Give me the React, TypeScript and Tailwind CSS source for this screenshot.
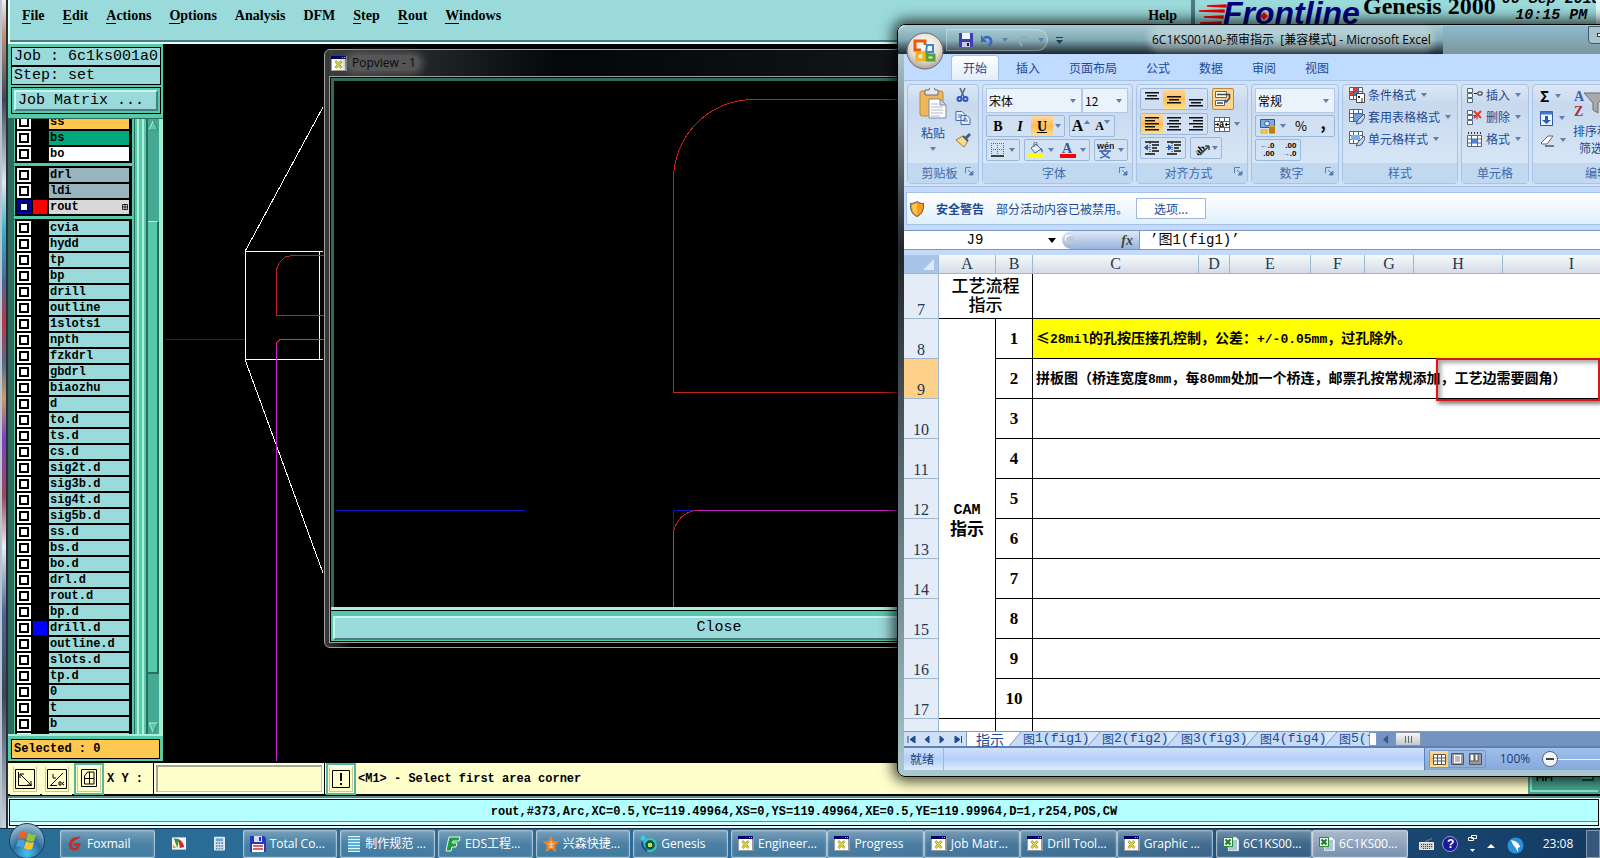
import { ReactNode } from 'react';

interface Layer {
  name: string;
  fill?: string;
  swatch?: string;
  active?: boolean;
}

const layerGroups: Layer[][] = [
  [
    { name: 'ss', fill: 'bg-[#ffc64f]' },
    { name: 'bs', fill: 'bg-[#00a67c]' },
    { name: 'bo', fill: 'bg-white' },
  ],
  [
    { name: 'drl', fill: 'bg-[#9ab4be]' },
    { name: 'ldi', fill: 'bg-[#9ab4be]' },
    { name: 'rout', fill: 'bg-[#d8d8d8]', swatch: 'bg-[#ff0000]', active: true },
  ],
  [
    'cvia', 'hydd', 'tp', 'bp', 'drill', 'outline', '1slots1', 'npth', 'fzkdrl', 'gbdrl', 'biaozhu',
    'd', 'to.d', 'ts.d', 'cs.d', 'sig2t.d', 'sig3b.d', 'sig4t.d', 'sig5b.d', 'ss.d', 'bs.d', 'bo.d',
    'drl.d', 'rout.d', 'bp.d', 'drill.d', 'outline.d', 'slots.d', 'tp.d', '0', 't', 'b', '',
  ].map((name) => ({ name, swatch: name === 'drill.d' ? 'bg-[#0000ff]' : undefined })),
];

const menus = [
  ['F', 'ile'], ['E', 'dit'], ['A', 'ctions'], ['O', 'ptions'], ['', 'Analysis'],
  ['', 'DFM'], ['S', 'tep'], ['R', 'out'], ['W', 'indows'],
];

const columns = [
  { name: 'A', width: 57 }, { name: 'B', width: 37 }, { name: 'C', width: 166 },
  { name: 'D', width: 31 }, { name: 'E', width: 81 }, { name: 'F', width: 54 },
  { name: 'G', width: 49 }, { name: 'H', width: 89 }, { name: 'I', width: 138 },
];

const notes: Record<number, string> = {
  1: '≤28mil的孔按压接孔控制，公差：+/-0.05mm，过孔除外。',
  2: '拼板图（桥连宽度8mm，每80mm处加一个桥连，邮票孔按常规添加，工艺边需要圆角）',
};

/* ---------- icons ---------- */

const Arrow = ({ className = '' }: { className?: string }) => (
  <svg width="7" height="4" viewBox="0 0 7 4" className={`shrink-0 ${className}`}>
    <path d="M0 0h6L3 4z" fill="#5f7fae" />
  </svg>
);

const XIcon = () => (
  <svg width="16" height="15" viewBox="0 0 16 15" className="shrink-0">
    <path d="M0 0h16v15H0z" fill="#999" />
    <path d="M1 3h13v11H1z" fill="#fff" />
    <path d="M0 0h15v3H0z" fill="#00006c" />
    <path d="M11 1h1v1h-1zM13 1h1v1h-1z" fill="#bbb" />
    <path d="M4.500 5l6 7M10.500 5l-6 7" stroke="#777a20" strokeWidth="2.500" />
    <path d="M4.500 5l6 7M10.500 5l-6 7" stroke="#e4dc30" strokeWidth="1.500" />
  </svg>
);

const ExcelIcon = () => (
  <svg width="16" height="16" viewBox="0 0 16 16" className="shrink-0">
    <path d="M5 1h8l3 3v11H5z" fill="#f4f8fb" stroke="#8aa" strokeWidth=".6" />
    <path d="M10 5h4M10 7h4M8 9h6M6 11h8M6 13h8" stroke="#6590c0" />
    <path d="M0 1h10v10H0z" fill="#2f8a35" />
    <path d="M1 2h8v8H1z" fill="#e4f5df" />
    <path d="M2.500 3.500l5 5M7.500 3.500l-5 5" stroke="#1c7a26" strokeWidth="2" />
  </svg>
);

const lines = (rows: [number, number][], top: number) =>
  rows.map(([x, w], i) => <rect key={i} x={x} y={top + i * 3} width={w} height="1.500" fill="#111" />);

const AlignTop = () => <svg width="16" height="16">{lines([[1, 14], [3, 10], [1, 14]], 1)}</svg>;
const AlignMid = () => <svg width="16" height="16">{lines([[1, 14], [3, 10], [1, 14]], 5)}</svg>;
const AlignBot = () => <svg width="16" height="16">{lines([[1, 14], [3, 10], [1, 14]], 8)}</svg>;
const AlignLeft = () => <svg width="16" height="16">{lines([[1, 14], [1, 10], [1, 14], [1, 10], [1, 14]], 1)}</svg>;
const AlignCenter = () => <svg width="16" height="16">{lines([[1, 14], [3, 10], [1, 14], [3, 10], [1, 14]], 1)}</svg>;
const AlignRight = () => <svg width="16" height="16">{lines([[1, 14], [5, 10], [1, 14], [5, 10], [1, 14]], 1)}</svg>;

const Indent = ({ flip = false }: { flip?: boolean }) => (
  <svg width="16" height="16" viewBox="0 0 16 16">
    <path d="M1 2h14M8 5h7M8 8h5M8 11h7M1 14h10" stroke="#111" strokeWidth="1.500" />
    <path d="M6 1v14" stroke="#111" strokeDasharray="1 1" />
    {flip ? (
      <path d="M0 7.500h4M2.500 5l3 2.500-3 2.500z" stroke="#2858c8" fill="#2858c8" />
    ) : (
      <path d="M6 7.500H2M3.500 5L.5 7.500l3 2.500z" stroke="#2858c8" fill="#2858c8" />
    )}
  </svg>
);

const WrapText = () => (
  <svg width="18" height="18" viewBox="0 0 18 18">
    <path d="M1.500 1.500h11v6h-11zM1.500 10.500h9v5h-9z" fill="#fff" stroke="#56657c" />
    <path d="M3 4.500h12.500v4L12 12" fill="none" stroke="#444" strokeWidth="1.500" />
    <path d="M11 9l-1 4 4-1z" fill="#2858c8" />
    <path d="M3 13h6" stroke="#444" strokeWidth="1.500" />
  </svg>
);

const MergeIcon = () => (
  <svg width="16" height="15" viewBox="0 0 16 15" className="shrink-0">
    <path d="M.5.500h15v14H.500zM.500 4.500h15M.500 10.500h15M5.500.500v4M10.500.500v4M5.500 10.500v4M10.500 10.500v4" fill="#fff" stroke="#56657c" />
    <path d="M1 7.500h3M12 7.500h3M3 6l2 1.500L3 9M13 6l-2 1.500L13 9" stroke="#111" fill="none" />
    <text x="5" y="10" fontSize="9" fontWeight="bold" fontFamily="Liberation Sans">a</text>
  </svg>
);

const OrientIcon = () => (
  <svg width="18" height="16" viewBox="0 0 18 16" className="shrink-0">
    <text x="0" y="13" fontSize="10" fontFamily="Liberation Serif" fontWeight="bold" transform="rotate(-40 6 9)">ab</text>
    <path d="M6 15L15 6M15 6h-4M15 6v4" stroke="#444" fill="none" strokeWidth="1.500" />
  </svg>
);

const BorderIcon = () => (
  <svg width="14" height="14" viewBox="0 0 14 14" className="shrink-0">
    <path d="M.5 0v12M6.500 0v12M12.500 0v12M0 .5h13M0 6.500h13" stroke="#667" strokeDasharray="1 1" />
    <path d="M0 13h13" stroke="#111" strokeWidth="1.500" />
  </svg>
);

const FillIcon = () => (
  <svg width="16" height="16" viewBox="0 0 16 16" className="shrink-0">
    <path d="M3 6l5-4 5 5-6 4z" fill="#e8f0fa" stroke="#4a6488" />
    <path d="M6 5V1.500A1.500 1.500 0 019 1.500V4" fill="none" stroke="#56657c" />
    <path d="M13 6c2 1 2 3 1.500 5L12 7z" fill="#3e70c0" />
    <path d="M0 12h16v4H0z" fill="#ffff00" />
  </svg>
);

const FontColorIcon = () => (
  <svg width="16" height="16" viewBox="0 0 16 16" className="shrink-0">
    <text x="2" y="11" fontSize="14" fontWeight="bold" fill="#35568e" fontFamily="Liberation Serif">A</text>
    <path d="M0 12h16v4H0z" fill="#ff0000" />
  </svg>
);

const PinyinIcon = () => (
  <svg width="17" height="17" viewBox="0 0 17 17" className="shrink-0">
    <text x="0" y="7" fontSize="9" fontWeight="bold" fill="#222" fontFamily="Liberation Sans">wén</text>
    <path d="M8 7v2M2 9h12M4 9c2 3 5 6 9 7M12 9c-2 4-5 6-9 7" stroke="#3d5ec0" strokeWidth="1.500" fill="none" />
  </svg>
);

const CurrencyIcon = () => (
  <svg width="17" height="17" viewBox="0 0 17 17" className="shrink-0">
    <path d="M1.500 1.500h14v8h-14z" fill="#7fa8de" stroke="#2f5a9c" />
    <circle cx="8" cy="5.500" r="2.500" fill="#dce9f8" stroke="#2f5a9c" />
    <path d="M10 8h6v8h-6z" fill="#e8a818" />
    <path d="M10 10h6M10 12h6M10 14h6" stroke="#8c5c00" />
    <path d="M2 12h6v3H2z" fill="#ffd24a" stroke="#a87800" strokeWidth=".5" />
  </svg>
);

const PasteIcon = () => (
  <svg width="28" height="31" viewBox="0 0 28 31">
    <rect x="1" y="3" width="23" height="25" rx="2" fill="#f0b758" stroke="#c08a3a" />
    <path d="M6 2h4a3 3 0 016 0h3v5H6z" fill="#e8e8ea" stroke="#6a6a70" />
    <path d="M10 11h11l6 6v13H10z" fill="#fff" stroke="#7689a5" />
    <path d="M21 11v6h6z" fill="#cfd9e8" stroke="#7689a5" />
    <path d="M12 16h7M12 19h12M12 22h12M12 25h12M12 28h9" stroke="#a9b8cf" />
  </svg>
);

const CutIcon = () => (
  <svg width="14" height="15" viewBox="0 0 14 15">
    <path d="M4 0l4 9M9 0L5 9" stroke="#56657c" strokeWidth="1.500" />
    <circle cx="3.500" cy="11" r="2" fill="none" stroke="#2858c8" strokeWidth="2" />
    <circle cx="9.500" cy="11" r="2" fill="none" stroke="#2858c8" strokeWidth="2" />
  </svg>
);

const CopyIcon = () => (
  <svg width="16" height="14" viewBox="0 0 16 14">
    <path d="M1 .5h6l3 3v6H1zM6 4.500h6l3 3v6H6z" fill="#e9f1fc" stroke="#4369a8" />
    <path d="M3 4h4M3 6h3M8 8h4M8 10h5" stroke="#4c7ccb" />
  </svg>
);

const BrushIcon = () => (
  <svg width="16" height="15" viewBox="0 0 16 15">
    <path d="M10 4l4-4 2 2-4 4z" fill="#3b5b96" />
    <path d="M1 7l7-4 5 5-4 6z" fill="#f5dd8d" stroke="#a37b2c" />
    <path d="M8 3l5 5" stroke="#555" strokeWidth="2" />
  </svg>
);

const TableIcon = ({ kind }: { kind: 'cond' | 'table' | 'cell' }) => (
  <svg width="16" height="16" viewBox="0 0 16 16" className="shrink-0">
    <path d="M.5.500h13v12H.500zM.500 4.500h13M.500 8.500h13M4.500.500v12M9.500.500v12" fill="#fff" stroke="#4a6488" />
    {kind === 'cond' && (
      <>
        <path d="M5 1h4v3H5zM1 5h3v3H1z" fill="#d9482b" />
        <path d="M5 5h4v3H5z" fill="#3f78cf" />
        <path d="M7.500 6.500h8v9h-8z" fill="#fff" stroke="#444" />
        <path d="M9 9l2 2M11 9l-2 2M12 12h2M12 14h2" stroke="#222" />
      </>
    )}
    {kind === 'table' && <path d="M5 5h8v7H5z" fill="#6f9fe0" />}
    {kind === 'cell' && <path d="M2 4h9v5H2z" fill="#7fb0ee" />}
    {kind !== 'cond' && (
      <path d="M15 5l-6 6-2 4 5-1 4-6z" fill="#c9d6ea" stroke="#3c5c94" />
    )}
  </svg>
);

const CellIcon = ({ kind }: { kind: 'insert' | 'delete' | 'format' }) => (
  <svg width="16" height="15" viewBox="0 0 16 15" className="shrink-0">
    {kind === 'format' ? (
      <>
        <path d="M.5 3.500h14v11H.500zM.500 7h14M.500 11h14M4.500 3v12M10.500 3v12" fill="#fff" stroke="#56657c" />
        <path d="M5 7h5v4H5z" fill="#4f83d8" />
        <path d="M1 1h14" stroke="#333" strokeDasharray="1 2" strokeWidth="2" />
      </>
    ) : (
      <>
        <path d="M.5.500h5v4h-5zM.500 5.500h5v4h-5zM.500 10.500h5v4h-5z" fill="#fff" stroke="#56657c" />
        {kind === 'insert' ? (
          <path d="M11 4h4v3h-4zM7 5.500h3" fill="#fff" stroke="#222" />
        ) : (
          <>
            <path d="M6 5.500h4v4" stroke="#2858c8" fill="none" />
            <path d="M7 1l7 7M14 1L7 8" stroke="#e03a25" strokeWidth="2" />
          </>
        )}
      </>
    )}
  </svg>
);

const SortIcon = () => (
  <svg width="34" height="30" viewBox="0 0 34 30">
    <text x="0" y="13" fontSize="14" fill="#3d5fae" fontWeight="bold" fontFamily="Liberation Serif">A</text>
    <text x="0" y="28" fontSize="14" fill="#a3343c" fontWeight="bold" fontFamily="Liberation Serif">Z</text>
    <path d="M10 5h23l-9 10v10l-5-3v-7z" fill="#a9a9a9" stroke="#6f6f6f" />
  </svg>
);

const OfficeOrb = () => (
  <svg width="38" height="38" viewBox="0 0 38 38">
    <defs>
      <radialGradient id="orb" cx=".5" cy=".35" r=".7">
        <stop offset="0" stopColor="#fff" />
        <stop offset=".6" stopColor="#e6ddd2" />
        <stop offset="1" stopColor="#9c958f" />
      </radialGradient>
    </defs>
    <circle cx="19" cy="19" r="18" fill="url(#orb)" stroke="#6d6a6a" />
    <g fill="none" strokeWidth="3">
      <path d="M15 18H9V9h10v4" stroke="#e8590c" />
      <path d="M21 13h6v7h-7z" stroke="#3c86d6" strokeWidth="2" />
      <path d="M18 19v9h-7v-7h5" stroke="#f2b41c" />
      <path d="M21 23h7v5h-7v-8" stroke="#58a032" />
    </g>
  </svg>
);

const StartOrb = () => (
  <svg width="38" height="38" viewBox="0 0 38 38">
    <defs>
      <radialGradient id="start" cx=".5" cy=".85" r=".8">
        <stop offset="0" stopColor="#49c4ee" />
        <stop offset=".5" stopColor="#2a6d9f" />
        <stop offset="1" stopColor="#9bbccd" />
      </radialGradient>
    </defs>
    <circle cx="19" cy="19" r="17.500" fill="url(#start)" stroke="#123e63" />
    <path d="M12 10c3-1 5-1 7 1l-2 7c-2-2-4-2-7-1z" fill="#e9602a" />
    <path d="M20 11c3 2 5 2 8 1l-2 7c-3 1-5 1-8-1z" fill="#8cc63e" />
    <path d="M10 18c3-1 5-1 7 1l-2 7c-2-2-4-2-7-1z" fill="#4aa0e0" />
    <path d="M18 19c3 2 5 2 8 1l-2 7c-3 1-5 1-8-1z" fill="#fcc42c" />
  </svg>
);

const Shield = () => (
  <svg width="14" height="16" viewBox="0 0 14 16" className="shrink-0">
    <path d="M7 .5c2 1.500 4 2 6.500 2 .3 6-1 10.500-6.500 13C1.500 13 .2 8.500.500 2.500 3 2.500 5 2 7 .5z" fill="#ff9a1a" stroke="#555" />
    <path d="M7 2v12C3.500 12 2.200 8.500 2 4c2 0 3.500-.7 5-2z" fill="#ffc65c" />
  </svg>
);

/* ---------- genesis ---------- */

const LayerRow = ({ layer }: { layer: Layer }) => (
  <label className="flex h-4 items-center gap-0.5 px-0.5">
    <input
      type="checkbox"
      aria-label={layer.name || 'layer'}
      className={`h-3.5 w-3.5 shrink-0 appearance-none border-2 bg-white ${
        layer.active
          ? 'border-[#0000b4] shadow-[inset_0_0_0_2px_#000060]'
          : 'border-white shadow-[inset_0_0_0_2px_#000]'
      }`}
    />
    <span className={`h-3.5 w-3.5 shrink-0 ${layer.swatch ?? ''}`} />
    <span className={`flex h-3.5 flex-1 items-center justify-between px-px text-[12px] leading-3.5 font-bold ${layer.fill ?? 'bg-[#9bdada]'}`}>
      {layer.name}
      {layer.active && (
        <svg width="6" height="6" viewBox="0 0 6 6">
          <path d="M.5.500h5v5h-5zM3 0v6M0 3h6" fill="none" stroke="#000" strokeWidth=".8" />
        </svg>
      )}
    </span>
  </label>
);

const Sidebar = () => (
  <aside className="flex w-[155px] shrink-0 flex-col bg-[#55c9aa] pt-[3px] font-['Liberation_Mono',monospace] text-black">
    <div className="mr-0.5 ml-[3px] flex flex-col text-[15px] leading-[17px]">
      <div className="border border-black bg-[#9bdada] pl-0.5 whitespace-nowrap">Job : 6c1ks001a0</div>
      <div className="border border-black bg-[#9bdada] pl-0.5">Step: set</div>
      <div className="mt-0.5 border border-black p-0.5">
        <button className="block h-[21px] w-full border-2 border-t-[#c8f4f4] border-r-[#4c7c80] border-b-[#4c7c80] border-l-[#c8f4f4] bg-[#9bdada] pl-0.5 text-left leading-4">
          Job Matrix ...
        </button>
      </div>
    </div>
    <div className="mt-1 flex min-h-0 flex-1 border-t border-[#2e6b5b]">
      <div className="w-[6px] bg-[#2e6b5b]" />
      <div className="w-[119px] overflow-hidden bg-[#55c9aa]">
        <div className="-mt-1.5 flex flex-col gap-[3px]">
          {layerGroups.map((group, i) => (
            <div key={i} className="border border-y-black border-r-black border-l-[#55c9aa] bg-black">
              {group.map((layer) => (
                <LayerRow key={layer.name} layer={layer} />
              ))}
            </div>
          ))}
        </div>
      </div>
      <div className="ml-0.5 w-px bg-[#2e6b5b]" />
      <div className="w-0.5 bg-[#55c9aa]" />
      <div className="mr-[3px] w-0.5 bg-[#a8f0da]" />
      <div className="w-0.5 bg-[#a8f0da]" />
      <div className="ml-0.5 flex flex-1 flex-col border-r-4 border-l-2 border-r-[#a0ecd4] border-l-[#2e6b5b] bg-[#45a892]">
        <svg width="11" height="12" viewBox="0 0 11 12">
          <path d="M5.500 1L1 11h9z" fill="#55c9aa" stroke="#a8f0da" />
          <path d="M5.500 1L10 11H1" fill="none" stroke="#2e6b5b" />
        </svg>
        <div className="mt-[90px] mb-12 flex-1 border-t border-r-2 border-b-2 border-t-[#a8f0da] border-r-[#2e6b5b] border-b-[#2e6b5b] bg-[#55c9aa]" />
        <svg width="11" height="12" viewBox="0 0 11 12">
          <path d="M1 1h9L5.500 11z" fill="#55c9aa" stroke="#a8f0da" />
          <path d="M10 1L5.500 11" stroke="#2e6b5b" />
        </svg>
      </div>
    </div>
    <div className="mb-0.5 border-t-2 border-[#a8f0da] px-[3px] pt-[3px]">
      <div className="h-5 border border-black bg-[#ffc850] pl-0.5 text-[12px] leading-[18px] font-bold">Selected : 0</div>
    </div>
  </aside>
);

const MainCanvas = () => (
  <svg className="h-full w-full bg-black" shapeRendering="crispEdges" fill="none">
    <g transform="translate(-164 -44)">
      <path d="M166 339.500H246" stroke="#1414c8" />
      <path d="M324 107L246 251.500V359.500L324 573M246 251.500H324M246 359.500H324M320.500 251V359" stroke="#fff" />
      <path d="M325 255.500H293L286 257L280 263L277.500 270V315.500H325" stroke="#c8201c" />
      <path d="M325 339.500H281M277.500 343V761" stroke="#c828c8" />
      <path d="M281 339.500L277.500 343" stroke="#c8201c" />
    </g>
  </svg>
);

const Popview = () => (
  <section className="absolute top-[49px] left-[324px] flex h-[599px] w-[790px] flex-col rounded-md border border-[#a0a0a0] bg-linear-to-r from-[#3a3c3e] via-black via-5% to-black p-1 pt-0">
    <header className="flex h-[26px] items-center bg-linear-to-r from-[#3c3e40] via-[#050708] via-30% to-[#1c2022] pl-0.5">
      <XIcon />
      <h2 className="ml-px rounded-lg bg-[#666]/70 px-1 font-['Open_Sans',sans-serif] text-[12px] leading-4 text-[#0a0a0a] shadow-[0_0_6px_4px_rgba(102,102,102,0.6)]">
        Popview - 1
      </h2>
    </header>
    <div className="flex min-h-0 flex-1 flex-col border border-[#a0a0a0] bg-black p-px">
      <svg className="min-h-0 w-full flex-1 border-t-[3px] border-l-[3px] border-[#2e6b5b] bg-black" fill="none" shapeRendering="crispEdges">
        <g transform="translate(-334 -81)">
          <path d="M1120 99.500H753A80 80 0 00673.500 180V392.500H1120" stroke="#c8201c" />
          <path d="M335 510.500H525M673.500 534V510.500H698" stroke="#1414c8" />
          <path d="M698 510.500A25 25 0 00673.500 534" stroke="#c8201c" />
          <path d="M698 510.500H1120M673.500 534V610" stroke="#c828c8" />
        </g>
      </svg>
      <div className="border-t-[3px] border-[#a8f0da] bg-[#55c9aa]">
        <div className="border-t border-black px-0.5 pt-0.5 pb-px">
          <button className="h-[24px] w-full border-2 border-t-[#c8f4f4] border-r-[#4c7c80] border-b-[#4c7c80] border-l-[#c8f4f4] bg-[#9bdada] font-['Liberation_Mono',monospace] text-[15px] leading-5">
            Close
          </button>
        </div>
      </div>
    </div>
  </section>
);

const GenesisHeader = () => (
  <header className="flex h-11 shrink-0 bg-[#9bdada] font-['Liberation_Serif',serif] text-black">
    <div className="flex flex-1 items-start border-b-2 border-l-2 border-[#e0ffff] shadow-[inset_0_-2px_0_#4c7c80]">
      <nav className="flex flex-1 gap-[18px] pt-1.5 pl-3 text-[14px] leading-[19px] font-bold">
        {menus.map(([key, rest]) => (
          <button key={rest}>
            <span className="border-b border-black">{key}</span>
            {rest}
          </button>
        ))}
        <button className="mr-3 ml-auto">Help</button>
      </nav>
    </div>
    <div className="ml-0.5 flex w-[409px] items-start overflow-hidden border-x-4 border-[#dffafa] border-l-[#4c7c80]">
      <svg width="164" height="40" viewBox="0 0 164 40" className="mt-px ml-1 shrink-0">
        <path d="M8 5l19-1v2zM0 10l25-1v2zM5 16l19-1v2zM1 22l21-1v2z" stroke="#f00000" strokeWidth="1.500" />
        <text x="24" y="23" fontSize="32" fontStyle="italic" fontWeight="bold" fill="#00007f" fontFamily="Liberation Sans">
          Frontline
        </text>
        <path d="M65 11l4 4-4 4-4-4z" fill="#f00000" />
      </svg>
      <span className="-mt-2 text-[24px] leading-7 font-bold whitespace-nowrap">Genesis 2000</span>
      <span className="-mt-2 ml-1.5 text-center font-['Liberation_Mono',monospace] text-[15px] leading-4 font-bold whitespace-nowrap italic">
        06 Sep 2018
        <br />
        10:15 PM
      </span>
    </div>
  </header>
);

const ToolButton = ({ label, green, children }: { label: string; green?: boolean; children: ReactNode }) => (
  <button
    aria-label={label}
    className={`flex h-8 w-[30px] shrink-0 items-center justify-center border-2 p-px ${green ? 'border-[#55b898]' : 'border-[#ffffcc]'} bg-[#ffffcc]`}
  >
    <span className="flex h-full w-full items-center justify-center border border-[#c8c8a0] border-t-[#ffffee]">
      <svg width="20" height="20" viewBox="0 0 20 20" fill="none" stroke="#000">
        {children}
      </svg>
    </span>
  </button>
);

const CommandBar = () => (
  <div className="flex h-[35px] shrink-0 items-center gap-0.5 border-y-2 border-black bg-[#ffffcc] pl-0.5 font-['Liberation_Mono',monospace] text-[12px] font-bold text-black">
    <ToolButton label="Resize">
      <path d="M.5.500h19v19H.500zM3.500 3v13.500H17M5 5l11 11M5 9V5h4M16 12v4h-4" />
    </ToolButton>
    <ToolButton label="Angle">
      <path d="M.5.500h19v19H.500zM3 17L16 4M3 16.500h7M6 5v4h3M12 13h2v3h-2zM17 13l-2 1.500 2 1.500" />
    </ToolButton>
    <ToolButton label="Grid" green>
      <path d="M2.500.500h15v17h-15zM5.500 7l3-4H15v12H5.500zM10.500 3v12M5.500 9.500H15" />
    </ToolButton>
    <label htmlFor="xy" className="w-[46px] shrink-0 pl-px whitespace-nowrap">X Y :</label>
    <input
      id="xy"
      className="h-[31px] w-[170px] border-2 border-[#ffffee] bg-[#ffffcc] px-1 shadow-[inset_2px_2px_0_#a8a888,inset_-1px_-1px_0_#c8c8a0] outline outline-black"
      defaultValue=""
    />
    <ToolButton label="Warning" green>
      <path d="M1.500 1.500h17v17h-17z" />
      <path d="M10 4v8M10 14v2" strokeWidth="2" />
    </ToolButton>
    <p className="flex-1">&lt;M1&gt; - Select first area corner</p>
    <div className="flex h-full w-[72px] items-end bg-[#45a892] p-0.5">
      <button className="flex h-full w-full items-center justify-between border-b-2 border-l-2 border-[#8fe4c8] px-1 text-[14px]">
        MM
        <span className="h-1.5 w-3 border-r-2 border-b-2 border-[#1c4c40] bg-[#55c9aa]" />
      </button>
    </div>
  </div>
);

/* ---------- excel ---------- */

const Combo = ({ label, value, className }: { label: string; value: string; className: string }) => (
  <div className={`relative flex items-center border border-[#b3c9e8] bg-[#eaf2fb] ${className}`}>
    <select aria-label={label} className="h-full w-full appearance-none pl-0.5 text-[12px] text-black">
      <option>{value}</option>
    </select>
    <Arrow className="pointer-events-none absolute right-1" />
  </div>
);

const Box = ({ children }: { children: ReactNode }) => (
  <div className="flex h-[22px] items-stretch rounded-xs border border-[#9ab7de] bg-[#d3e2f4]/60">{children}</div>
);

const IconButton = ({ label, wide = 'w-[22px]', on, children }: { label: string; wide?: string; on?: boolean; children: ReactNode }) => (
  <button
    aria-label={label}
    className={`flex h-full items-center justify-center gap-1 ${wide} ${on ? 'bg-linear-to-b from-[#ffd9a0] via-[#ffbd55] to-[#ffe08a]' : ''}`}
  >
    {children}
  </button>
);

const Group = ({ title, width, launcher, children }: { title: string; width: string; launcher?: boolean; children: ReactNode }) => (
  <section className={`flex shrink-0 flex-col rounded-sm border border-[#a9c4e6] bg-linear-to-b from-[#dce7f5] via-[#c8d9ee] via-20% to-[#dcebf9] ${width}`}>
    <div className="flex-1 px-[3px] pt-[3px]">{children}</div>
    <h3 className="flex h-5 items-center bg-[#c1d8f1] text-[12px] text-[#3e6aaa]">
      <span className="flex-1 text-center">{title}</span>
      {launcher && (
        <svg width="9" height="9" viewBox="0 0 9 9" className="-ml-1.5 mr-1 mb-1">
          <path d="M.5 6V.500H6" fill="none" stroke="#5c80b4" />
          <path d="M3 3l4 4M4 8h4V4z" fill="#5c80b4" stroke="#5c80b4" />
        </svg>
      )}
    </h3>
  </section>
);

const TextCommand = ({ icon, text }: { icon: ReactNode; text: string }) => (
  <button className="flex h-[22px] items-center gap-[3px] text-[12px] text-[#1e4a94]">
    {icon}
    {text}
    <Arrow className="ml-0.5" />
  </button>
);

const Ribbon = () => (
  <div className="flex h-[107px] gap-[3px] overflow-hidden border-y border-[#a4c2e8] bg-[#d2e2f4] px-[3px] pt-[3px] pb-0.5">
    <Group title="剪贴板" width="w-[72px]" launcher>
      <div className="flex justify-between px-1">
        <button className="flex flex-col items-center gap-1 pl-1 text-[12px] leading-5 text-[#1e4a94]">
          <PasteIcon />
          粘贴
          <Arrow />
        </button>
        <div className="flex flex-col items-center gap-2">
          <button aria-label="剪切"><CutIcon /></button>
          <button aria-label="复制"><CopyIcon /></button>
          <button aria-label="格式刷"><BrushIcon /></button>
        </div>
      </div>
    </Group>
    <Group title="字体" width="w-[151px]" launcher>
      <div className="flex">
        <Combo label="字体" value="宋体" className="h-[25px] w-[96px]" />
        <Combo label="字号" value="12" className="h-[25px] w-[46px]" />
      </div>
      <div className="mt-0.5 flex gap-1 font-['Liberation_Serif',serif] text-black">
        <Box>
          <IconButton label="加粗"><b className="text-[14px]">B</b></IconButton>
          <IconButton label="倾斜"><b className="text-[14px] italic">I</b></IconButton>
          <IconButton label="下划线" on><b className="text-[14px] underline">U</b></IconButton>
          <IconButton label="更多" wide="w-[11px]"><Arrow /></IconButton>
        </Box>
        <Box>
          <IconButton label="增大字号"><b className="text-[16px]">A</b><Arrow className="mb-2 -ml-1 rotate-180" /></IconButton>
          <IconButton label="减小字号"><b className="text-[12px]">A</b><Arrow className="mb-2 -ml-1" /></IconButton>
        </Box>
      </div>
      <div className="mt-0.5 flex gap-1">
        <Box><IconButton label="边框" wide="w-[32px]"><BorderIcon /><Arrow /></IconButton></Box>
        <Box>
          <IconButton label="填充颜色" wide="w-[32px]"><FillIcon /><Arrow /></IconButton>
          <IconButton label="字体颜色" wide="w-[32px]"><FontColorIcon /><Arrow /></IconButton>
        </Box>
        <Box><IconButton label="拼音" wide="w-[32px]"><PinyinIcon /><Arrow /></IconButton></Box>
      </div>
    </Group>
    <Group title="对齐方式" width="w-[112px]" launcher>
      <div className="mb-[3px] flex items-center gap-1">
        <Box>
          <IconButton label="顶端对齐"><AlignTop /></IconButton>
          <IconButton label="垂直居中" on><AlignMid /></IconButton>
          <IconButton label="底端对齐"><AlignBot /></IconButton>
        </Box>
        <button aria-label="自动换行" className="rounded-xs border border-[#b88a45] bg-[#ffd58a] p-px"><WrapText /></button>
      </div>
      <div className="flex items-center gap-1.5">
        <Box>
          <IconButton label="左对齐" on><AlignLeft /></IconButton>
          <IconButton label="居中"><AlignCenter /></IconButton>
          <IconButton label="右对齐"><AlignRight /></IconButton>
        </Box>
        <button aria-label="合并" className="flex items-center gap-1"><MergeIcon /><Arrow /></button>
      </div>
      <div className="mt-0.5 flex gap-1">
        <Box>
          <IconButton label="减少缩进"><Indent /></IconButton>
          <IconButton label="增加缩进"><Indent flip /></IconButton>
        </Box>
        <Box><IconButton label="方向" wide="w-[30px]"><OrientIcon /><Arrow className="-ml-1" /></IconButton></Box>
      </div>
    </Group>
    <Group title="数字" width="w-[88px]" launcher>
      <Combo label="数字格式" value="常规" className="h-[25px] w-[80px]" />
      <div className="mt-0.5 flex">
        <Box>
          <IconButton label="货币" wide="w-[34px]"><CurrencyIcon /><Arrow /></IconButton>
          <IconButton label="百分比"><span className="text-[13px] text-black">%</span></IconButton>
          <IconButton label="千位"><b className="mb-2 text-[16px] leading-3 text-black">,</b></IconButton>
        </Box>
      </div>
      <div className="mt-0.5 flex font-['Liberation_Sans',sans-serif] text-[8px] leading-[8px] font-bold text-black">
        <Box>
          <IconButton label="增加小数"><span className="text-right"><i className="text-[#2858c8] not-italic">←</i>.0<br />.00</span></IconButton>
          <IconButton label="减少小数"><span className="text-right">.00<br /><i className="text-[#2858c8] not-italic">→</i>.0</span></IconButton>
        </Box>
      </div>
    </Group>
    <Group title="样式" width="w-[116px]">
      <div className="-mt-1 pl-[3px]">
        <TextCommand icon={<TableIcon kind="cond" />} text="条件格式" />
        <TextCommand icon={<TableIcon kind="table" />} text="套用表格格式" />
        <TextCommand icon={<TableIcon kind="cell" />} text="单元格样式" />
      </div>
    </Group>
    <Group title="单元格" width="w-[68px]">
      <div className="-mt-1 pl-0.5">
        <TextCommand icon={<CellIcon kind="insert" />} text="插入" />
        <TextCommand icon={<CellIcon kind="delete" />} text="删除" />
        <TextCommand icon={<CellIcon kind="format" />} text="格式" />
      </div>
    </Group>
    <Group title="编辑" width="w-[130px]">
      <div className="flex gap-1.5 pl-1">
        <div className="flex flex-col gap-1.5">
          <button aria-label="求和" className="flex h-4 items-center gap-1.5 text-[15px] font-bold text-black">Σ<Arrow /></button>
          <button aria-label="填充" className="flex h-4 items-center gap-1.5">
            <svg width="13" height="15" viewBox="0 0 13 15">
              <path d="M.5.500h12v14H.500z" fill="#eaf2fc" stroke="#2f5a9c" />
              <path d="M.5.500h12v3H.500z" fill="#3f78cf" />
              <path d="M5 5h3v4h3l-4.500 4L2 9h3z" fill="#2858c8" />
            </svg>
            <Arrow />
          </button>
          <button aria-label="清除" className="flex h-4 items-center gap-1.5">
            <svg width="14" height="13" viewBox="0 0 14 13">
              <path d="M1 9l7-7h5L7 10H2z" fill="#fff" stroke="#666" />
              <path d="M5 12h9" stroke="#111" />
            </svg>
            <Arrow />
          </button>
        </div>
        <button className="flex flex-col items-center text-[12px] leading-[17px] whitespace-nowrap text-[#1e4a94]">
          <SortIcon />
          <span className="mt-1">排序和</span>
          <span>筛选</span>
        </button>
      </div>
    </Group>
  </div>
);

// half-width runs are set smaller so that two of them fill about one full-width cell
const CellText = ({ text }: { text: string }) => (
  <>
    {text.split(/([\x20-\x7e]+)/).map((part, i) =>
      i % 2 ? (
        <span key={i} className="font-['Liberation_Mono',monospace] text-[13px]">{part}</span>
      ) : (
        part
      ),
    )}
  </>
);

const rowHead = 'border-r border-b border-[#9eb6ce] text-[16px] leading-4 font-normal align-bottom text-[#25384f]';

const Sheet = () => (
  <div className="relative min-h-0 flex-1 overflow-hidden bg-white">
    <table className="w-[737px] table-fixed border-separate border-spacing-0 font-['Liberation_Serif','Noto_Sans_CJK_SC',serif] text-black">
      <colgroup>
        <col style={{ width: 35 }} />
        {columns.map((c) => (
          <col key={c.name} style={{ width: c.width }} />
        ))}
      </colgroup>
      <thead>
        <tr className="h-[19px]">
          <th className="border-r border-b border-[#9eb6ce] bg-[#a9c4e9] p-0">
            <svg width="11" height="11" viewBox="0 0 11 11" className="mr-1 ml-auto"><path d="M11 0v11H0z" fill="#dfe9f7" /></svg>
          </th>
          {columns.map((c) => (
            <th key={c.name} className="border-r border-b border-[#9eb6ce] bg-linear-to-b from-[#f6fafb] to-[#d5dce8] p-0 text-[16px] leading-4 font-normal text-[#25384f]">
              {c.name}
            </th>
          ))}
        </tr>
      </thead>
      <tbody>
        <tr className="h-[45px]">
          <th className={`bg-[#e4ecf7] p-0 ${rowHead}`}>7</th>
          <td colSpan={2} className="border-r border-b border-black p-0 text-center text-[17px] leading-[19px] font-medium">
            工艺流程<br />指示
          </td>
          <td colSpan={7} className="border-b border-black p-0" />
        </tr>
        {Array.from({ length: 10 }, (_, i) => i + 1).map((n) => (
          <tr key={n} className="h-10">
            <th className={`p-0 ${rowHead} ${n === 2 ? 'bg-[#ffd08a]' : 'bg-[#e4ecf7]'}`}>{n + 7}</th>
            {n === 1 && (
              <td rowSpan={10} className="border-r border-b border-black p-0 text-center text-[17px] leading-[19px] font-bold">
                <span className="font-['Liberation_Mono',monospace] text-[15px]">CAM</span><br />指示
              </td>
            )}
            <td className="border-r border-b border-black p-0 text-center text-[17px] font-bold">{n}</td>
            <td
              colSpan={7}
              className={`border-b border-black p-0 pl-[3px] font-['Noto_Sans_CJK_SC',sans-serif] text-[14px] leading-5 font-bold whitespace-nowrap ${n === 1 ? 'bg-[#ffff00]' : ''}`}
            >
              {notes[n] && <CellText text={notes[n]} />}
            </td>
          </tr>
        ))}
        <tr className="h-10">
          <th className="border-r border-[#9eb6ce] bg-[#e4ecf7] p-0" />
          <td className="border-r border-black p-0" />
          <td className="border-r border-black p-0" />
          <td colSpan={7} className="p-0" />
        </tr>
      </tbody>
    </table>
    {/* review mark over the rounded corner note */}
    <div className="absolute top-[103px] left-[532px] h-[43px] w-[164px] border-2 border-[#d81818] shadow-[2px_3px_4px_rgba(0,0,0,0.5),inset_3px_3px_4px_rgba(0,0,0,0.35)]" />
  </div>
);

const SheetTabs = () => (
  <div className="flex h-[17px] items-stretch border-t border-b-2 border-[#7a9ac8] border-b-[#5c80b8] bg-[#7494c0] text-[12px] leading-[14px] text-[#1e4a94]">
    <div className="flex w-[63px] items-center justify-around border-r border-[#7a9ac8] bg-[#cfe0f6]">
      {['M1 0v7M8 0L3 3.500 8 7z', 'M6 0L2 3.500 6 7z', 'M2 0l4 3.500L2 7z', 'M1 0l5 3.500L1 7zM7.500 0v7'].map((d) => (
        <button key={d} aria-label="翻页">
          <svg width="9" height="7" viewBox="0 0 9 7"><path d={d} fill="#1e4a94" stroke="#1e4a94" /></svg>
        </button>
      ))}
    </div>
    <button className="w-[42px] shrink-0 bg-white pl-1 text-[14px]">指示</button>
    {[1, 2, 3, 4, 5].map((n) => (
      <button key={n} className={`flex shrink-0 items-center overflow-hidden bg-[#c6dbf6] whitespace-nowrap ${n === 5 ? 'w-[44px]' : 'w-[79px]'}`}>
        <svg width="14" height="14" viewBox="0 0 14 14" className="shrink-0">
          <path d="M0 14L12 0H0z" fill={n === 1 ? '#fff' : '#d8e7fa'} />
          <path d="M0 14L12 0" stroke="#7a9ac8" />
        </svg>
        图<span className="font-['Liberation_Mono',monospace] text-[13px]">{n}(fig{n})</span>
      </button>
    ))}
    <div className="w-2 shrink-0 border border-[#7a9ac8] bg-white" />
    <div className="flex flex-1 items-center">
      <svg width="18" height="9" viewBox="0 0 18 9"><path d="M11 0v9L6 4.500z" fill="#3c5684" /></svg>
      <div className="flex h-[14px] w-[26px] items-center justify-center gap-0.5 rounded-xs border border-[#8a93a3] bg-linear-to-b from-[#f6f6f8] to-[#c3c8d1]">
        <i className="h-[7px] w-px bg-[#666]" />
        <i className="h-[7px] w-px bg-[#666]" />
        <i className="h-[7px] w-px bg-[#666]" />
      </div>
    </div>
  </div>
);

const ExcelStatus = () => (
  <footer className="flex h-[22px] items-center bg-linear-to-b from-[#cfe1f9] via-[#b4d0f8] via-50% to-[#dcebfd] text-[12px] text-[#173a7c]">
    <span className="flex h-full w-10 items-center border-r border-[#9ab7de] pl-1.5">就绪</span>
    <div className="ml-auto flex h-full w-[226px] items-center border-l border-[#5c80b8] bg-linear-to-b from-[#9fbfea] to-[#86a9dc] pl-1">
      <div className="flex h-[18px] shrink-0 rounded-xs border border-[#7d96bd]">
        <IconButton label="普通" wide="w-[18px]" on>
          <svg width="13" height="11" viewBox="0 0 13 11"><path d="M.5.500h12v10H.500zM.500 4h12M.500 7h12M4.500 0v11M8.500 0v11" fill="#fff" stroke="#555" /></svg>
        </IconButton>
        <IconButton label="页面布局" wide="w-[18px]">
          <svg width="13" height="12" viewBox="0 0 13 12"><path d="M.5.500h12v11H.500z" fill="#999" stroke="#555" /><path d="M3 2h7v8H3z" fill="#fff" /><path d="M4 4h5M4 6h5M4 8h5" stroke="#777" /></svg>
        </IconButton>
        <IconButton label="分页预览" wide="w-[19px]">
          <svg width="13" height="12" viewBox="0 0 13 12"><path d="M.5.500h12v11H.500z" fill="#999" stroke="#555" /><path d="M1 1h4v7H1zM6 1h3v7H6z" fill="#fff" stroke="#555" /></svg>
        </IconButton>
      </div>
      <span className="w-[50px] shrink-0 pl-2 text-center font-['Open_Sans',sans-serif]">100%</span>
      <button aria-label="缩小" className="ml-1.5 shrink-0">
        <svg width="16" height="16" viewBox="0 0 16 16"><circle cx="8" cy="8" r="7.500" fill="#f2f5fa" stroke="#56657c" /><path d="M4 8h8" stroke="#444" strokeWidth="2" /></svg>
      </button>
      <input
        type="range"
        aria-label="显示比例"
        className="h-px w-[96px] shrink-0 appearance-none bg-[#e8f0fc] [&::-webkit-slider-thumb]:h-3 [&::-webkit-slider-thumb]:w-2 [&::-webkit-slider-thumb]:appearance-none [&::-webkit-slider-thumb]:border [&::-webkit-slider-thumb]:border-[#56657c] [&::-webkit-slider-thumb]:bg-[#f2f5fa]"
      />
    </div>
  </footer>
);

const ExcelWindow = () => (
  <section className="absolute top-6 left-[897px] flex h-[753px] w-[760px] flex-col rounded-lg border border-black bg-linear-to-b from-[#c5dde4] via-[#20272c] via-30% to-[#a9c8cf] p-1.5 pt-0 font-['Noto_Sans_CJK_SC',sans-serif] shadow-[0_0_14px_4px_rgba(0,0,0,0.75)]">
    <header className="relative -mx-1.5 flex h-[29px] items-center rounded-t-lg border-t border-white/70 bg-linear-to-b from-[#a8cad2] via-[#7fa9b4] via-50% to-[#1c282e] pl-12">
      <div className="absolute inset-y-0 right-0 left-[545px] bg-linear-to-b from-[#8db9cf] to-[#7b979c]" />
      <div className="flex h-[22px] w-[102px] items-center gap-2 rounded-r-full border border-white/30 bg-white/10 pl-3">
        <svg width="14" height="14" viewBox="0 0 14 14"><path d="M0 0h14v14H0z" fill="#3c3fae" /><path d="M3 0h8v6H3z" fill="#f3f3fb" /><path d="M3 9h8v5H3z" fill="#c5c8e8" /><path d="M8 10h2v3H8z" fill="#222" /></svg>
        <svg width="13" height="13" viewBox="0 0 13 13"><path d="M3 4c5-3 10 2 5 8" fill="none" stroke="#3468c8" strokeWidth="2.500" /><path d="M0 1v7h6z" fill="#3468c8" /></svg>
        <Arrow />
        <svg width="13" height="13" viewBox="0 0 13 13"><path d="M10 4c-5-3-10 2-5 8" fill="none" stroke="#8faab8" strokeWidth="2" /></svg>
        <Arrow />
      </div>
      <svg width="8" height="7" viewBox="0 0 8 7" className="ml-2"><path d="M0 0h7v1H0zM0 3h7L3.500 7z" fill="#243a52" /></svg>
      <h1 className="relative ml-[88px] font-['Open_Sans','Noto_Sans_CJK_SC',sans-serif] text-[12px] whitespace-pre text-black">
        <span className="rounded-lg bg-white/30 shadow-[0_0_6px_4px_rgba(255,255,255,0.3)]">6C1KS001A0-预审指示  [兼容模式] - Microsoft Excel</span>
      </h1>
      <button aria-label="最小化" className="absolute top-0 left-[690px] flex h-[18px] w-7 items-center justify-center rounded-b border border-[#3e5a66] bg-[#a9c4cf]">
        <span className="h-1 w-2.5 border border-[#333] bg-white" />
      </button>
      <button aria-label="Office" className="absolute top-1.5 left-2 z-10"><OfficeOrb /></button>
    </header>
    <div className="flex min-h-0 flex-1 flex-col bg-[#c3dafa]">
      <nav className="flex h-[26px] items-end bg-[#bfdbff] pl-[47px] text-[12px] text-[#1e4a94]">
        <button className="h-[25px] w-[48px] rounded-t border border-b-0 border-[#a4c2e8] bg-linear-to-b from-white to-[#e2edfa]">开始</button>
        <div className="flex h-[25px] items-center gap-[29px] pl-[17px]">
          {['插入', '页面布局', '公式', '数据', '审阅', '视图'].map((t) => (
            <button key={t}>{t}</button>
          ))}
        </div>
      </nav>
      <Ribbon />
      <div className="mx-0.5 mt-[5px] mb-[5px] flex h-[33px] items-center border border-[#a4c2e8] bg-linear-to-b from-white to-[#dff0fb] pl-[3px] text-[12px] text-[#1e4a94]">
        <Shield />
        <b className="ml-3">安全警告</b>
        <span className="ml-3">部分活动内容已被禁用。</span>
        <button className="ml-2 h-[21px] w-[70px] border border-[#a4b9d6] bg-white">选项...</button>
      </div>
      <div className="mb-[5px] flex h-5 items-stretch border-y border-[#7a96ba] bg-white font-['Liberation_Mono','Noto_Sans_CJK_SC',monospace] text-[14px]">
        <div className="relative flex w-[158px] items-center">
          <input aria-label="名称框" defaultValue="J9" className="w-full pr-4 text-center text-black" />
          <svg width="8" height="5" viewBox="0 0 8 5" className="absolute right-1.5"><path d="M0 0h8L4 5z" fill="#000" /></svg>
        </div>
        <div className="flex w-[78px] items-center justify-between rounded-l-full border-r border-[#7a96ba] bg-linear-to-b from-[#dfe9f5] to-[#98b4de] pr-1.5 pl-1">
          <span className="h-2 w-2 rounded-full bg-[#c0c8d4] shadow-[-1px_-1px_0_#fff]" />
          <i className="font-['Liberation_Serif',serif] text-[14px] font-bold text-[#444]">fx</i>
        </div>
        <input aria-label="编辑栏" defaultValue="’图1(fig1)’" className="min-w-0 flex-1 pl-2.5 text-black" />
      </div>
      <Sheet />
      <SheetTabs />
      <ExcelStatus />
    </div>
  </section>
);

/* ---------- taskbar ---------- */

const taskIcons: Record<string, ReactNode> = {
  foxmail: (
    <svg width="16" height="16" viewBox="0 0 16 16"><path d="M14 1C7 0 1 4 2 10c1 6 10 6 11 0l1-3H7l-1 3h4c-1 3-5 3-5-1 0-4 4-5 9-8z" fill="#d3281c" /></svg>
  ),
  total: (
    <svg width="16" height="16" viewBox="0 0 16 16"><path d="M0 0h14l2 2v14H0z" fill="#2a35c0" /><path d="M4 0h8v6H4z" fill="#d8dcf4" /><path d="M9 1h2v4H9z" fill="#2a35c0" /><path d="M2 8h12v8H2z" fill="#fff" /><path d="M3 10h10M3 13h10" stroke="#d03030" strokeWidth="1.500" /></svg>
  ),
  doc: (
    <svg width="14" height="16" viewBox="0 0 14 16"><path d="M1 0h12v16H1z" fill="#e6f6fc" /><path d="M1 2h12M1 5h12M1 8h12M1 11h12M1 14h12" stroke="#2b9cc8" strokeWidth="1.500" /></svg>
  ),
  eds: (
    <svg width="16" height="16" viewBox="0 0 16 16"><path d="M4 1h11l-1 4H8l-.5 2H12l-1 4H7l-1 4H1z" fill="#1f9a3c" stroke="#e8f8ea" /></svg>
  ),
  star: (
    <svg width="16" height="16" viewBox="0 0 16 16"><path d="M8 0l2.500 5 5.500.6-4 4L13 16l-5-3-5 3 1-6.400-4-4L5.500 5z" fill="#f58220" /><path d="M5 8h6M8 5v7M6 11h4" stroke="#ffe2c0" /></svg>
  ),
  genesis: (
    <svg width="17" height="17" viewBox="0 0 17 17"><circle cx="10" cy="10" r="6" fill="#1c5c6c" stroke="#30d0b0" strokeWidth="2" /><circle cx="10" cy="10" r="3" fill="#b0e840" stroke="#082838" /><circle cx="3" cy="3" r="2.500" fill="#30d0e8" /><path d="M2 7l1 5 4 4" stroke="#2040a0" strokeWidth="2" fill="none" /></svg>
  ),
  x: <XIcon />,
  excel: <ExcelIcon />,
};

const TaskButton = ({ icon, text, active }: { icon: string; text: string; active?: boolean }) => (
  <button
    className={`flex h-7 min-w-0 flex-1 items-center gap-1 rounded-xs border border-white/50 pl-1.5 whitespace-nowrap shadow-[inset_0_0_2px_rgba(255,255,255,0.4)] ${
      active ? 'bg-linear-to-b from-[#a9b9cb] to-[#7790ae]' : 'bg-linear-to-b from-white/35 via-white/15 via-50% to-white/10'
    }`}
  >
    <span className="shrink-0">{taskIcons[icon]}</span>
    <span>{text}</span>
  </button>
);

const Taskbar = () => (
  <footer className="relative z-20 flex h-[30px] shrink-0 items-center border-t border-[#0c2c48] bg-linear-to-r from-[#2a6d97] via-[#2f6a94] via-55% to-[#133a63] font-['Open_Sans','Noto_Sans_CJK_SC',sans-serif] text-[12px] text-white">
    <button aria-label="Start" className="-mt-1.5 ml-2 h-[38px] w-[38px] shrink-0"><StartOrb /></button>
    <div className="ml-3.5 flex w-[1348px] min-w-0 items-center gap-[3px]">
      <TaskButton icon="foxmail" text="Foxmail" />
      <div className="flex w-[82px] shrink-0 items-center justify-around">
        <button aria-label="Viewer">
          <svg width="14" height="13" viewBox="0 0 16 14"><path d="M0 0h16v14H0z" fill="#f4f4f0" /><path d="M2 1l6 1-2 10z" fill="#2c9a38" /><path d="M7 2c4 1 6 5 7 9l-5 1z" fill="#d42a20" /><path d="M1 8l4 4H1z" fill="#e0a020" /></svg>
        </button>
        <button aria-label="Calculator">
          <svg width="11" height="15" viewBox="0 0 12 15"><rect width="12" height="15" rx="1" fill="#dcebf5" /><path d="M2 2h8v3H2z" fill="#6aa8d8" /><path d="M2 7h8M2 10h8M2 13h8" stroke="#6a8aa8" strokeWidth="2" strokeDasharray="2 1" /></svg>
        </button>
      </div>
      <TaskButton icon="total" text="Total Co..." />
      <TaskButton icon="doc" text="制作规范 ..." />
      <TaskButton icon="eds" text="EDS工程..." />
      <TaskButton icon="star" text="兴森快捷..." />
      <TaskButton icon="genesis" text="Genesis" />
      <div className="flex w-[482px] shrink-0">
        <TaskButton icon="x" text="Engineer..." />
        <TaskButton icon="x" text="Progress" />
        <TaskButton icon="x" text="Job Matr..." />
        <TaskButton icon="x" text="Drill Tool..." />
        <TaskButton icon="x" text="Graphic ..." />
      </div>
      <div className="flex w-[192px] shrink-0">
        <TaskButton icon="excel" text="6C1KS00..." />
        <TaskButton icon="excel" text="6C1KS00..." active />
      </div>
    </div>
    <div className="ml-auto flex h-full shrink-0 items-center">
      <svg width="15" height="14" viewBox="0 0 15 14"><path d="M.5 5.500h14v7H.500z" fill="#ccc" stroke="#eee" /><path d="M2 7.500h11M2 9.500h11M4 11.500h7" stroke="#444" strokeDasharray="1 1" /><path d="M7 5c0-3 5-1 6-4" stroke="#999" fill="none" /></svg>
      <svg width="16" height="16" viewBox="0 0 16 16" className="ml-2"><circle cx="8" cy="8" r="7.500" fill="#1a1a9a" stroke="#9a9ad8" /><text x="5" y="12" fontSize="12" fontWeight="bold" fill="#fff" fontFamily="Liberation Sans">?</text></svg>
      <svg width="9" height="18" viewBox="0 0 9 18" className="ml-2.5"><path d="M3.500.500h5v3h-5zM.500 2.500h5v3h-5z" fill="#234" stroke="#fff" /><path d="M2 14h5L4.500 17z" fill="#fff" /></svg>
      <svg width="8" height="4" viewBox="0 0 8 4" className="mt-1 ml-2.5"><path d="M4 0l4 4H0z" fill="#fff" /></svg>
      <svg width="17" height="17" viewBox="0 0 17 17" className="mt-1 ml-3"><circle cx="8.500" cy="8.500" r="8" fill="#2a90dc" /><path d="M4 3c5 1 8 3 9 7l-2 1v4L8 10c-2-2-3-4-4-7z" fill="#fff" /></svg>
      <time className="mr-1 ml-2.5 w-[48px] text-center">23:08</time>
      <button aria-label="Show desktop" className="h-7 w-3.5 border border-white/40 bg-white/15" />
    </div>
  </footer>
);

const App = () => (
  <div className="relative flex h-screen min-h-[600px] flex-col overflow-hidden bg-black">
    <div className="flex min-h-0 flex-1">
      <div className="w-2 shrink-0 border-r-2 border-l-2 border-[#2c3038] border-l-[#b8c4d4] bg-[linear-gradient(to_bottom,#e8eef4_0%,#c09878_4%,#3c4858_12%,#e0e8f0_22%,#38b0c8_28%,#4a6894_34%,#b83848_39%,#5a6c88_44%,#c8a060_48%,#8040c0_53%,#a04858_60%,#e8f0f4_66%,#4a6894_74%,#3c4858_84%,#c8d4e0_100%)]" />
      <div className="flex min-w-0 flex-1 flex-col">
        <GenesisHeader />
        <main className="flex min-h-0 flex-1">
          <Sidebar />
          <div className="min-w-0 flex-1">
            <MainCanvas />
          </div>
        </main>
        <CommandBar />
        <div className="flex h-8 shrink-0 flex-col border-t-2 border-[#5f8a8a] bg-[#dfffff] p-px pb-0.5">
          <p className="flex-1 border border-black bg-[#b4ffff] text-center font-['Liberation_Mono',monospace] text-[12px] leading-[25px] font-bold text-black shadow-[inset_0_-3px_0_#dfffff,inset_0_-4px_0_#5f8a8a]">
            rout,#373,Arc,XC=0.5,YC=119.49964,XS=0,YS=119.49964,XE=0.5,YE=119.99964,D=1,r254,POS,CW
          </p>
        </div>
      </div>
    </div>
    <Popview />
    <ExcelWindow />
    <Taskbar />
  </div>
);

export default App;
